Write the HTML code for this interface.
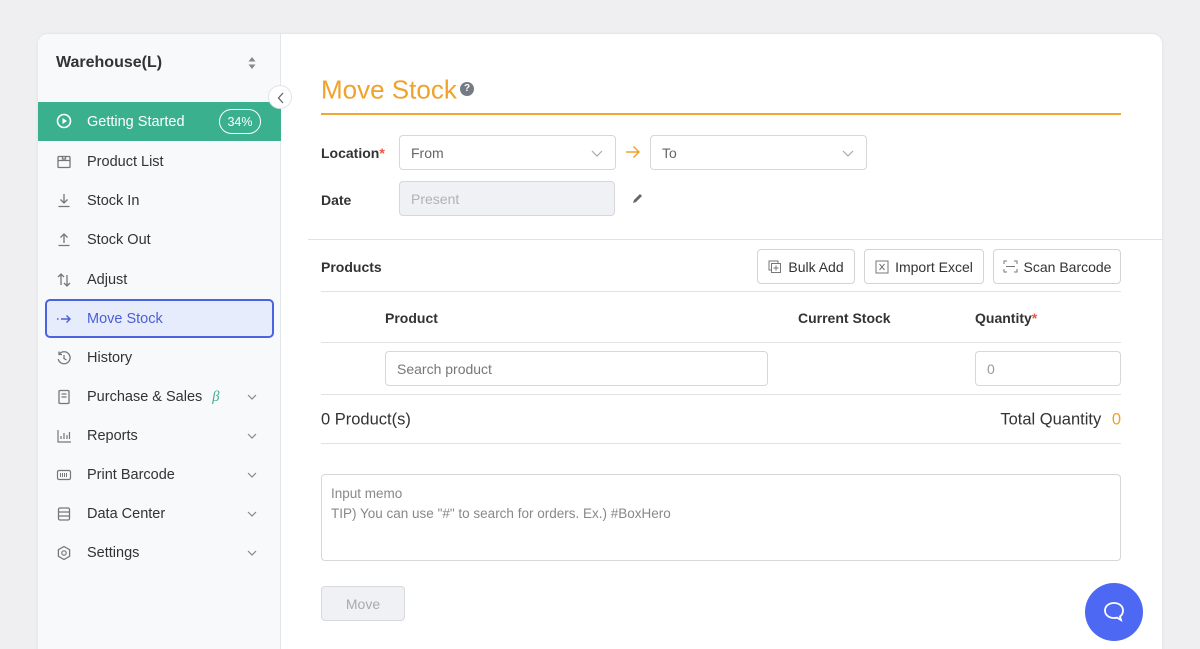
<!DOCTYPE html>
<html style="overflow:hidden;height:649px"><head><style>
*{box-sizing:border-box;margin:0;padding:0}
html,body{overflow:hidden}
body{width:1200px;height:649px;background:#efeff1;font-family:"Liberation Sans",sans-serif;position:relative;color:#222}
.card{position:absolute;left:38px;top:34px;width:1124px;height:640px;background:#fff;border-radius:10px;overflow:hidden;box-shadow:0 0 3px rgba(0,0,0,.08)}
.side{position:absolute;left:0;top:0;width:243px;height:100%;background:#f8f9fb;border-right:1px solid #e4e5e8}
.a{position:absolute}
.t{position:absolute;white-space:nowrap;transform:translateY(-50%)}
.item{position:absolute;left:0;width:243px;height:39px;font-size:14.5px;color:#333}
.item .ic{position:absolute;left:18px;top:12px;width:16px;height:16px}
.item .lb{position:absolute;left:49px;top:12px}
.chev{position:absolute;left:209px;top:17px;width:10px;height:6px}
.line{position:absolute;height:1px;background:#e1e2e5}
.inp{position:absolute;border:1px solid #d6d7db;border-radius:4px;background:#fff;font-size:14px;color:#666;padding-left:11px;display:flex;align-items:center}
.btn{position:absolute;border:1px solid #d3d4d8;border-radius:4px;background:#fff;font-size:14px;color:#333;display:flex;align-items:center;justify-content:center;gap:6px}
.lbl{font-size:14px;font-weight:bold;color:#333}
</style></head><body>
<div class="card">
 <div class="side">
  <div class="t" style="left:18px;top:29px;font-size:16px;font-weight:bold;color:#333">Warehouse(L)</div>
  <svg class="a" style="left:209px;top:22px" width="10" height="14"><path d="M5 1L8.5 5.5H1.5Z M5 13L8.5 8.5H1.5Z" fill="#888"/></svg>
  <div class="a" style="left:0;top:68px;width:243px;height:39px;background:#3bb08f"></div>
  <svg class="a" style="left:18px;top:79px" width="16" height="16"><circle cx="8" cy="8" r="6.5" fill="none" stroke="#fff" stroke-width="1.6"/><path d="M6.5 5v6l4.5-3z" fill="#fff"/></svg>
  <div class="t" style="left:49px;top:88px;font-size:14.5px;color:#fff">Getting Started</div>
  <div class="a" style="left:181px;top:75px;width:42px;height:25px;border:1.5px solid #fff;border-radius:13px;color:#fff;font-size:12.5px;display:flex;align-items:center;justify-content:center">34%</div>

  <div class="item" style="top:108px"><svg class="ic" viewBox="0 0 16 16"><rect x="2" y="2.5" width="12" height="11" rx="1" fill="none" stroke="#777" stroke-width="1.3"/><path d="M2 6.5h12M6.5 2.5v2.5h3V2.5" fill="none" stroke="#777" stroke-width="1.3"/></svg><span class="lb">Product List</span></div>
  <div class="item" style="top:147px"><svg class="ic" viewBox="0 0 16 16"><path d="M8 1v9M4.5 6.5L8 10l3.5-3.5M2.5 13.5h11" fill="none" stroke="#777" stroke-width="1.3"/></svg><span class="lb">Stock In</span></div>
  <div class="item" style="top:186px"><svg class="ic" viewBox="0 0 16 16"><path d="M8 11V2M4.5 5.5L8 2l3.5 3.5M2.5 13.5h11" fill="none" stroke="#777" stroke-width="1.3"/></svg><span class="lb">Stock Out</span></div>
  <div class="item" style="top:226px"><svg class="ic" viewBox="0 0 16 16"><path d="M5 13V2M2 5l3-3 3 3M11 3v11M8 11l3 3 3-3" fill="none" stroke="#777" stroke-width="1.3"/></svg><span class="lb">Adjust</span></div>
  <div class="a" style="left:7px;top:265px;width:229px;height:39px;background:#e7ecfd;border:2px solid #4a63e0;border-radius:5px"></div>
  <div class="item" style="top:265px;color:#4a5fd6"><svg class="ic" viewBox="0 0 16 16"><path d="M1 8h1.5M5 8h9M10.5 4.5L14 8l-3.5 3.5" fill="none" stroke="#4a5fd6" stroke-width="1.4"/></svg><span class="lb">Move Stock</span></div>
  <div class="item" style="top:304px"><svg class="ic" viewBox="0 0 16 16"><path d="M3 4.5A6 6 0 1 1 2.2 9M3 1.5v3h3M8 5v3.5l2.5 1.5" fill="none" stroke="#777" stroke-width="1.3"/></svg><span class="lb">History</span></div>
  <div class="item" style="top:343px"><svg class="ic" viewBox="0 0 16 16"><rect x="3" y="1.5" width="10" height="13" rx="1" fill="none" stroke="#777" stroke-width="1.3"/><path d="M5.5 5h5M5.5 8h5" stroke="#777" stroke-width="1.3"/></svg><span class="lb">Purchase &amp; Sales <i style="color:#3bb08f;font-family:'Liberation Serif',serif;margin-left:6px">β</i></span><svg class="chev"><path d="M1 1l4 4 4-4" fill="none" stroke="#888" stroke-width="1.2"/></svg></div>
  <div class="item" style="top:382px"><svg class="ic" viewBox="0 0 16 16"><path d="M2 2v12h13M5 11V8M8 11V5M11 11V7M13.5 11V4" fill="none" stroke="#777" stroke-width="1.2"/></svg><span class="lb">Reports</span><svg class="chev"><path d="M1 1l4 4 4-4" fill="none" stroke="#888" stroke-width="1.2"/></svg></div>
  <div class="item" style="top:421px"><svg class="ic" viewBox="0 0 16 16"><rect x="1.5" y="3.5" width="13" height="9" rx="1.5" fill="none" stroke="#777" stroke-width="1.2"/><path d="M4.5 6v4M6.5 6v4M8.5 6v4M10.5 6v4" stroke="#777"/></svg><span class="lb">Print Barcode</span><svg class="chev"><path d="M1 1l4 4 4-4" fill="none" stroke="#888" stroke-width="1.2"/></svg></div>
  <div class="item" style="top:460px"><svg class="ic" viewBox="0 0 16 16"><rect x="2.5" y="2" width="11" height="12" rx="1.5" fill="none" stroke="#777" stroke-width="1.3"/><path d="M2.5 6h11M2.5 10h11" stroke="#777" stroke-width="1.3"/></svg><span class="lb">Data Center</span><svg class="chev"><path d="M1 1l4 4 4-4" fill="none" stroke="#888" stroke-width="1.2"/></svg></div>
  <div class="item" style="top:499px"><svg class="ic" viewBox="0 0 16 16"><circle cx="8" cy="8" r="2.2" fill="none" stroke="#777" stroke-width="1.2"/><path d="M8 1.5l5.6 3.25v6.5L8 14.5l-5.6-3.25v-6.5z" fill="none" stroke="#777" stroke-width="1.3"/></svg><span class="lb">Settings</span><svg class="chev"><path d="M1 1l4 4 4-4" fill="none" stroke="#888" stroke-width="1.2"/></svg></div>
 </div>
 <div class="a" style="left:230px;top:51px;width:24px;height:24px;border-radius:50%;background:#fff;border:1px solid #e2e3e6"><svg class="a" style="left:8px;top:6px" width="8" height="12"><path d="M6 1L1.5 6 6 11" fill="none" stroke="#666" stroke-width="1.3"/></svg></div>

 <div class="t" style="left:283px;top:56px;font-size:26px;color:#f0a22b">Move Stock</div>
 <div class="a" style="left:422px;top:48px;width:14px;height:14px;border-radius:50%;background:#767a85;color:#fff;font-size:10px;font-weight:bold;text-align:center;line-height:14px">?</div>
 <div class="a" style="left:283px;top:79px;width:800px;height:2px;background:#f0a830"></div>

 <div class="t lbl" style="left:283px;top:119px">Location<span style="color:#e54">*</span></div>
 <div class="inp" style="left:361px;top:101px;width:217px;height:35px">From<svg class="a" style="left:191px;top:14px" width="12" height="7"><path d="M1 1l5 5 5-5" fill="none" stroke="#aaa" stroke-width="1.2"/></svg></div>
 <svg class="a" style="left:587px;top:111px" width="16" height="14"><path d="M1 7h13M8.5 1.5L14 7l-5.5 5.5" fill="none" stroke="#f0a22b" stroke-width="1.5"/></svg>
 <div class="inp" style="left:612px;top:101px;width:217px;height:35px">To<svg class="a" style="left:191px;top:14px" width="12" height="7"><path d="M1 1l5 5 5-5" fill="none" stroke="#aaa" stroke-width="1.2"/></svg></div>
 <div class="t lbl" style="left:283px;top:166px">Date</div>
 <div class="inp" style="left:361px;top:147px;width:216px;height:35px;background:#f0f1f4;color:#b0b2b8">Present</div>
 <svg class="a" style="left:593px;top:158px" width="13" height="13"><path d="M2 11l1-3 6-6 2 2-6 6z" fill="#666"/></svg>

 <div class="line" style="left:270px;top:205px;width:854px"></div>
 <div class="t lbl" style="left:283px;top:233px">Products</div>
 <div class="btn" style="left:719px;top:215px;width:98px;height:35px"><svg width="14" height="14"><rect x="1" y="1" width="9" height="9" fill="none" stroke="#777"/><rect x="3.5" y="3.5" width="9" height="9" fill="#fff" stroke="#777"/><path d="M8 5.5v5M5.5 8h5" stroke="#777"/></svg>Bulk Add</div>
 <div class="btn" style="left:826px;top:215px;width:120px;height:35px"><svg width="14" height="14"><rect x="1" y="1" width="12" height="12" fill="none" stroke="#777"/><path d="M4.5 4l5 6M9.5 4l-5 6" stroke="#777"/></svg>Import Excel</div>
 <div class="btn" style="left:955px;top:215px;width:128px;height:35px"><svg width="15" height="13"><path d="M1 4V1h3M11 1h3v3M1 9v3h3M11 12h3V9M3 6.5h9" fill="none" stroke="#777"/></svg>Scan Barcode</div>
 <div class="line" style="left:283px;top:257px;width:800px"></div>
 <div class="t lbl" style="left:347px;top:284px">Product</div>
 <div class="t lbl" style="left:760px;top:284px">Current Stock</div>
 <div class="t lbl" style="left:937px;top:284px">Quantity<span style="color:#e54">*</span></div>
 <div class="line" style="left:283px;top:308px;width:800px"></div>
 <div class="inp" style="left:347px;top:317px;width:383px;height:35px;color:#777">Search product</div>
 <div class="inp" style="left:937px;top:317px;width:146px;height:35px;color:#999">0</div>
 <div class="line" style="left:283px;top:360px;width:800px"></div>
 <div class="t" style="left:283px;top:386px;font-size:16.5px;color:#333">0 Product(s)</div>
 <div class="t" style="right:41px;top:386px;font-size:16.5px;color:#333">Total Quantity <span style="color:#f0a22b;margin-left:6px">0</span></div>
 <div class="line" style="left:283px;top:409px;width:800px"></div>
 <div class="a" style="left:283px;top:440px;width:800px;height:87px;border:1px solid #d6d7db;border-radius:4px;padding:9px 9px;font-size:13.5px;color:#888;line-height:20px">Input memo<br>TIP) You can use "#" to search for orders. Ex.) #BoxHero</div>
 <div class="btn" style="left:283px;top:552px;width:84px;height:35px;background:#f0f1f4;color:#aaa;border-color:#d8d9dd">Move</div>
 <div class="a" style="left:1047px;top:549px;width:58px;height:58px;border-radius:50%;background:#4d68f2"><svg class="a" style="left:17px;top:17px" width="25" height="25"><path d="M12 3C6.5 3 3 6.3 3 10.5S6.5 18 12 18c1 0 2-.1 3-.4L19 20l-1-3.5c2-1.4 3-3.5 3-6C21 6.3 17.5 3 12 3z" fill="none" stroke="#fff" stroke-width="1.8"/></svg></div>
</div>
</body></html>
